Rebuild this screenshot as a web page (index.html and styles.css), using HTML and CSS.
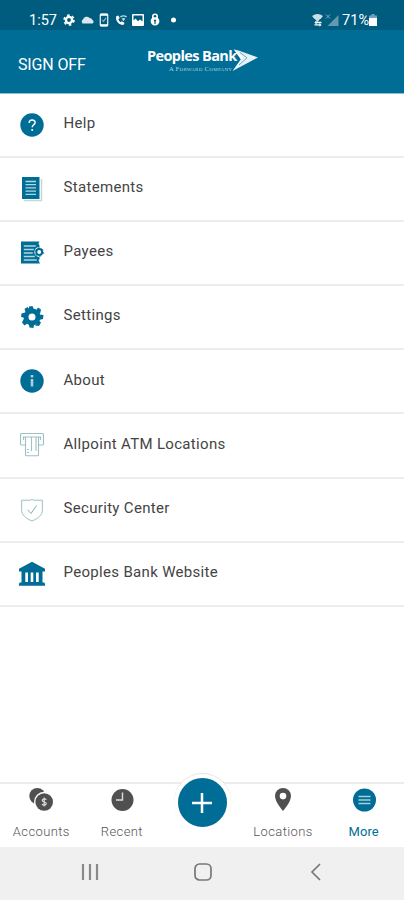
FILE: index.html
```html
<!DOCTYPE html>
<html lang="en">
<head>
    <meta charset="UTF-8">
    <meta name="viewport" content="width=device-width, initial-scale=1.0">
    <title>Peoples Bank - More</title>
    <link rel="stylesheet" href="styles.css">
</head>
<body>

    <!-- Status Bar -->
    <div class="status-bar">
        <div class="status-left">
            <span class="time">1:57</span>
            <svg class="status-icons" width="114" height="16" viewBox="0 0 114 16" fill="#fff">
                <circle cx="6" cy="8" r="3.1" fill="none" stroke="#fff" stroke-width="2.4"/>
                <circle cx="6" cy="8" r="4.9" fill="none" stroke="#fff" stroke-width="1.8" stroke-dasharray="2.6 2.53"/>
                <path d="M19.5 11.5a2.7 2.7 0 0 1 .4-4.1 4 4 0 0 1 6.7-1.4 3 3 0 0 1 2.8 2 1.9 1.9 0 0 1 .1 3.5z" opacity=".85"/>
                <rect x="37.3" y="2" width="7.4" height="12" rx="1" fill="none" stroke="#dcebf2" stroke-width="1.3"/>
                <path d="M37 2h8v2h-8zM37 12h8v2h-8zM39 8l1.5 2 3-4-.6-.4-2.4 3.1-.8-1z" opacity=".8"/>
                <path d="M53.2 4.2c-1 4.6 2.5 8.8 7.2 8.8l1.2-1.9-2.7-1.9-1.3 1c-1.3-.6-2-1.7-2.2-3.1l1.4-1-1.6-2.7z"/>
                <path d="M57 4.2a7 7 0 0 1 7 0l-.9 1.2a5 5 0 0 0-5.2 0zM58.6 6.6a4 4 0 0 1 3.8 0l-1.9 2.6z" opacity=".75"/>
                <path fill-rule="evenodd" d="M70 2h10a1 1 0 0 1 1 1v10a1 1 0 0 1-1 1H70a1 1 0 0 1-1-1V3a1 1 0 0 1 1-1zm.5 1.6v5l2-2 2.5 2.6 2-1.6 2.5 2V3.6z"/>
                <path d="M70 10.2l2.5-2.6 2.5 2.7 2-1.6 2.6 2.2V13H70z"/>
                <path fill-rule="evenodd" d="M89 6V4.6a3 3 0 0 1 6 0V6a4.4 4.4 0 1 1-6 0zm1.6-.8h2.8v-.8a1.4 1.4 0 0 0-2.8 0zM92 7.4a1.2 1.2 0 0 0-.6 2.2V12h1.2V9.6A1.2 1.2 0 0 0 92 7.4z"/>
                <circle cx="110.5" cy="8" r="2.5"/>
            </svg>
        </div>
        <div class="status-right">
            <svg width="28" height="14" viewBox="0 0 28 14" fill="#fff">
                <path d="M0 3a9 9 0 0 1 11 0L8.5 6h-6zM3 6h5l-2.5 3z" opacity=".8"/>
                <path d="M2.5 9.5l2-2.2v1.5h5v1.4h-5v1.5zM9.5 12l-2-2v1.2h-5v1.3h5v1.3z"/>
                <path d="M26.5 2v11H15.5z" opacity=".38"/>
                <path d="M14 1.5l4 4M18 1.5l-4 4" stroke="#fff" stroke-width="1" opacity=".5"/>
            </svg>
            <span class="battery-text">71%</span>
            <svg class="battery" width="8" height="12" viewBox="0 0 8 12">
                <path d="M2.5 0h3v1.5H8V12H0V1.5h2.5z" fill="#6fa3bb"/>
                <path d="M0 4h8v8H0z" fill="#fff"/>
            </svg>
        </div>
    </div>

    <!-- Header -->
    <div class="header">
        <div class="sign-off">SIGN OFF</div>
        <div class="logo">
            <div class="logo-text">
                <div class="logo-name">Peoples Bank</div>
                <div class="logo-tagline">A Forward Company</div>
            </div>
            <svg class="logo-mark" width="28" height="24" viewBox="0 0 28 24">
                <path d="M3 1.5l4.5 1L27 9.5 1.5 23l8.5-12z" fill="#e6f2f7"/>
                <path d="M9 4.500l7 5.300L8 17" fill="none" stroke="#4c9ab7" stroke-width=".8"/>
                <path d="M2.500 1l9.500 8.500-2 2z" fill="#fff"/>
            </svg>
        </div>
    </div>

    <!-- Menu List -->
    <div class="menu">
        <div class="menu-item">
            <svg class="menu-icon" width="28" height="28" viewBox="0 0 28 28">
                <circle cx="14" cy="14" r="11.7" fill="#006d96"/>
                <path d="M11.2 11.9c0-3.9 5.9-3.8 5.9-.4 0 2.2-2.9 2.3-2.9 4.7" fill="none" stroke="#fff" stroke-width="1.5"/>
                <circle cx="14.2" cy="18.9" r="1" fill="#fff"/>
            </svg>
            <span class="menu-label">Help</span>
        </div>
        <div class="menu-item">
            <svg class="menu-icon" width="28" height="28" viewBox="0 0 28 28">
                <path d="M6 25.500h17.500V4" fill="none" stroke="#c3d8d9" stroke-width="1.5"/>
                <path d="M4 2h17.500v22H4z" fill="#006d96"/>
                <path d="M7.500 6.500h10.500M7.500 9.700h10.500M7.500 12.900h10.500M7.500 16.100h10.500M7.500 19.300h10.500" stroke="#b3d5df" stroke-width="1.3"/>
            </svg>
            <span class="menu-label">Statements</span>
        </div>
        <div class="menu-item">
            <svg class="menu-icon" width="28" height="28" viewBox="0 0 28 28">
                <path d="M3 2.500h18.500l-1 2 1 2V20l-1 1.500 1.500 3H3z" fill="#006d96"/>
                <path d="M5.800 7h12M5.800 10.500h10M5.800 14h9M5.800 17.500h11M5.800 21h13" stroke="#b3d5df" stroke-width="1.3"/>
                <circle cx="21.200" cy="13" r="4.900" fill="#fff"/>
                <circle cx="21.200" cy="13" r="2.900" fill="none" stroke="#006d96" stroke-width="2"/>
                <circle cx="21.200" cy="13" r="4.200" fill="none" stroke="#006d96" stroke-width="1" stroke-dasharray="2.2 2.2"/>
            </svg>
            <span class="menu-label">Payees</span>
        </div>
        <div class="menu-item">
            <svg class="menu-icon" width="28" height="28" viewBox="0 0 28 28">
                <circle cx="14" cy="14" r="6" fill="none" stroke="#006d96" stroke-width="5"/>
                <path d="M11 3.500l3.500-.5 1.500 4h-5zM20 4.500l3 2-1 4.500-4-3.500zM25.500 12l-.5 4-4 1v-5.500zM23 19.500l-2 3.500-4-.5 4-5zM15.500 25l-4-.5-1-4.500 5.500 1.500zM6.500 22.500L4 19.500l2-4 4 4.500zM3 14l.5-3.500 4-1v5.500zM6.500 6l3-2 3 3.500-4.500 3z" fill="#006d96"/>
            </svg>
            <span class="menu-label">Settings</span>
        </div>
        <div class="menu-item">
            <svg class="menu-icon" width="28" height="28" viewBox="0 0 28 28">
                <circle cx="14" cy="14" r="11.7" fill="#006d96"/>
                <path d="M12.700 12h2.600v7.500h-2.600zM12.700 8h2.600v2.600h-2.600z" fill="#a9d0dd"/>
            </svg>
            <span class="menu-label">About</span>
        </div>
        <div class="menu-item">
            <svg class="menu-icon" width="28" height="28" viewBox="0 0 28 28" fill="none" stroke="#9dc1c4" stroke-width="1.1">
                <path d="M7.500 14H3.500a1 1 0 0 1-1-1V3.500a1 1 0 0 1 1-1h21a1 1 0 0 1 1 1V13a1 1 0 0 1-1 1h-4"/>
                <path d="M5.500 9V6h17v3"/>
                <path d="M7.500 6v17.500a1.300 1.300 0 0 0 1.300 1.300h10.400a1.300 1.300 0 0 0 1.300-1.300V6M13.500 6v14M18 6v14M9 18.500h2M9 21.500h2"/>
            </svg>
            <span class="menu-label">Allpoint ATM Locations</span>
        </div>
        <div class="menu-item">
            <svg class="menu-icon" width="28" height="28" viewBox="0 0 28 28" fill="none" stroke="#8fbcb9" stroke-width=".9">
                <path d="M14 3l-1.500 1.200H3.600V14c0 5 4.400 8.500 10.400 11 6-2.500 10.400-6 10.400-11V4.200h-8.900z"/>
                <path d="M9.500 13.800l3.500 3.700 5.500-8" stroke="#70aaa8"/>
            </svg>
            <span class="menu-label">Security Center</span>
        </div>
        <div class="menu-item">
            <svg class="menu-icon" width="28" height="28" viewBox="0 0 28 28" fill="#006d96">
                <path d="M14 1.800l13 7v2.700H24.500V22.500h2l.8 3.300H.7l.8-3.300h2V11.500H1V8.800z"/>
                <path d="M7.300 12.500H10V22H7.300zM12.700 12.500h2.600V22h-2.600zM18 12.500h2.700V22H18z" fill="#fff"/>
            </svg>
            <span class="menu-label">Peoples Bank Website</span>
        </div>
    </div>

    <!-- Bottom Tabs -->
    <div class="tabs">
        <div class="tab">
            <svg width="26" height="26" viewBox="0 0 26 26">
                <circle cx="9.300" cy="9" r="8" fill="#505050"/>
                <circle cx="16.200" cy="15" r="10.200" fill="#fff"/>
                <circle cx="16.200" cy="15" r="8.800" fill="#505050"/>
                <path d="M18.300 12.800c-.8-1.500-4-1.200-4 .6 0 2 4 1.200 4 3.200 0 1.800-3.400 2-4.200.3M16.200 10.500v9" fill="none" stroke="#ddd" stroke-width="1.2"/>
            </svg>
            <span>Accounts</span>
        </div>
        <div class="tab">
            <svg width="26" height="26" viewBox="0 0 26 26">
                <circle cx="13.500" cy="13" r="11" fill="#505050"/>
                <path d="M13.500 5.500V13H7" fill="none" stroke="#ddd" stroke-width="1.4"/>
            </svg>
            <span>Recent</span>
        </div>
        <div class="tab tab-add">
            <div class="add-button">
                <svg width="22" height="22" viewBox="0 0 22 22"><path d="M11 1v20M1 11h20" stroke="#fff" stroke-width="2.5"/></svg>
            </div>
        </div>
        <div class="tab">
            <svg width="26" height="26" viewBox="0 0 26 26">
                <path fill-rule="evenodd" d="M13 1a8 8 0 0 0-8 8c0 6 8 15 8 15s8-9 8-15a8 8 0 0 0-8-8zm0 4.800a3.300 3.300 0 1 1 0 6.600 3.300 3.300 0 0 1 0-6.600z" fill="#505050"/>
            </svg>
            <span>Locations</span>
        </div>
        <div class="tab active">
            <svg width="26" height="26" viewBox="0 0 26 26">
                <circle cx="13.500" cy="13" r="11.500" fill="#006d96"/>
                <path d="M7.500 9.500h12M7.500 13h12M7.500 16.500h12" stroke="#a6cfdc" stroke-width="1.6"/>
            </svg>
            <span>More</span>
        </div>
    </div>

    <!-- System Navigation -->
    <div class="system-nav">
        <svg width="20" height="20" viewBox="0 0 20 20"><path d="M3 2v16M10 2v16M17 2v16" stroke="#8a8a8a" stroke-width="2.2"/></svg>
        <svg width="20" height="20" viewBox="0 0 20 20"><rect x="2" y="2" width="16" height="16" rx="4.5" fill="none" stroke="#777" stroke-width="1.7"/></svg>
        <svg width="20" height="20" viewBox="0 0 20 20"><path d="M14 2L6 10l8 8" fill="none" stroke="#777" stroke-width="1.7"/></svg>
    </div>

</body>
</html>
```

FILE: styles.css
```css
/* General Reset */
* {
    margin: 0;
    padding: 0;
    box-sizing: border-box;
}

body {
    font-family: Roboto, sans-serif;
    background: #fff;
    color: #333;
    width: 404px;
    height: 900px;
    display: flex;
    flex-direction: column;
    overflow: hidden;
}

svg {
    display: block;
    flex-shrink: 0;
}

/* Status Bar */
.status-bar {
    display: flex;
    justify-content: space-between;
    height: 30px;
    padding: 9px 27px 0 29px;
    background: #005c7f;
    color: #fff;
}

.status-left,
.status-right {
    display: flex;
    align-items: center;
    height: 21px;
}

.time {
    width: 34px;
    padding-top: 1px;
    font-size: 14.5px;
}

.battery-text {
    margin-left: 2px;
    padding-top: 1px;
    font-size: 14.5px;
}

/* Header */
.header {
    display: flex;
    height: 64px;
    padding-left: 18px;
    background: #006d96;
    border-bottom: 1px solid #8dbed0;
    color: #fff;
}

.sign-off {
    width: 129px;
    padding-top: 25px;
    font-size: 16px;
    line-height: 20px;
    letter-spacing: -0.15px;
}

.logo {
    display: flex;
    padding-top: 17px;
}

.logo-text {
    width: 90px;
    white-space: nowrap;
}

.logo-name {
    font-family: "Open Sans", sans-serif;
    font-size: 14.5px;
    font-weight: bold;
    line-height: 17px;
    letter-spacing: -0.6px;
}

.logo-tagline {
    margin-top: 1px;
    padding-left: 22px;
    font-family: "Liberation Serif", serif;
    font-size: 6.5px;
    font-variant: small-caps;
    line-height: 7px;
    letter-spacing: 0.3px;
    color: #b5d3df;
}

.logo-mark {
    margin-left: -6px;
    margin-top: 1px;
}

/* Menu List */
.menu {
    flex: 1;
}

.menu-item {
    display: flex;
    height: 64.1px;
    padding: 17px 18px 0;
    border-bottom: 2px solid #ededed;
}

.menu-label {
    margin-left: 17.5px;
    padding-top: 2.2px;
    font-size: 15px;
    line-height: 20px;
    letter-spacing: 0.32px;
    color: #444;
}

/* Bottom Tabs */
.tabs {
    display: flex;
    height: 65px;
    padding-left: 1px;
    border-top: 2px solid #ececec;
    font-size: 13px;
    font-weight: 300;
    letter-spacing: 0.4px;
    color: #555;
}

.tab {
    display: flex;
    flex: 1;
    flex-direction: column;
    align-items: center;
    padding-top: 3px;
}

.tab span {
    margin-top: 11px;
    line-height: 16px;
}

.tab.active {
    color: #006d96;
    font-weight: 400;
    letter-spacing: 0.1px;
}

.tab-add {
    padding-top: 0;
}

.add-button {
    display: flex;
    align-items: center;
    justify-content: center;
    width: 57px;
    height: 57px;
    margin-top: -10px;
    background: #006d96;
    border: 4px solid #fff;
    border-radius: 50%;
    box-shadow: 0 -1px 1px #e2e2e2;
}

/* System Navigation */
.system-nav {
    display: flex;
    justify-content: space-between;
    height: 53px;
    padding: 15px 78px 0 80px;
    background: #f0f0f0;
}
```
